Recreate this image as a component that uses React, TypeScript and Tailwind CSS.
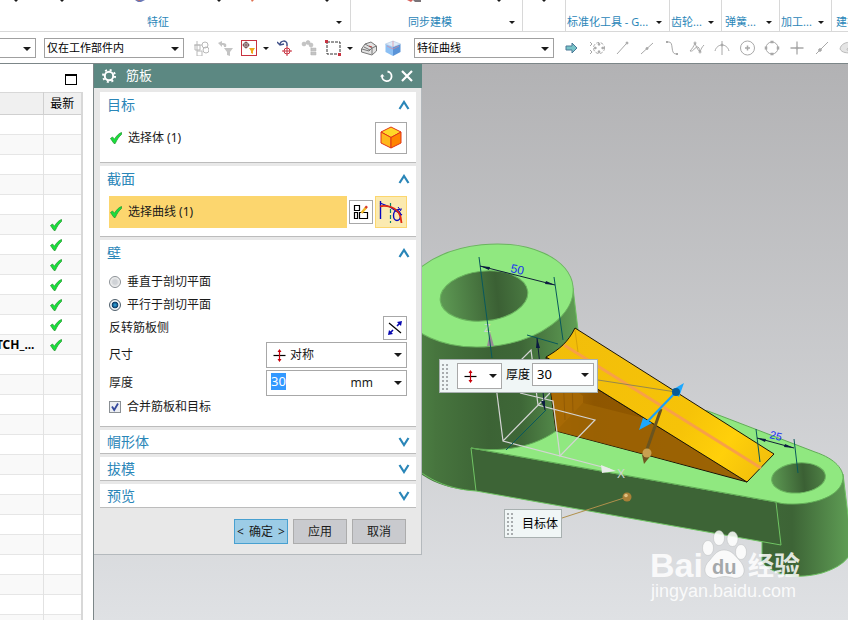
import React, { useState } from 'react';
import { clsx } from 'clsx';

/* ---------- small glyphs ---------- */

const Caret = ({ className = 'w-2 h-1' }: { className?: string }) => (
  <svg viewBox="0 0 8 4" className={clsx('shrink-0 fill-[#1a1a1a]', className)}>
    <path d="M0 0h8L4 4z" />
  </svg>
);

const Tick = () => (
  <svg viewBox="0 0 12 12" className="w-3 h-3 shrink-0">
    <path d="M.5 6.500 2.500 5l2 2.200C6 4.500 8.500 1.500 11.500.5v2C9 4.500 7 7.500 5.200 11.500H4z" fill="#18e03c" stroke="#2a9a35" strokeWidth=".8" />
  </svg>
);

const Chevron = ({ open }: { open: boolean }) => (
  <svg viewBox="0 0 12 10" className="w-3 h-[10px]" fill="none" stroke="#2a86b8" strokeWidth="2.200">
    <path d={open ? 'M1.500 9 6 2l4.500 7' : 'M1.500 1 6 8l4.500-7'} />
  </svg>
);

const SymmetricIcon = () => (
  <svg viewBox="0 0 13 13" className="w-[13px] h-[13px] shrink-0">
    <path d="M.5 6.500h12" stroke="#000" strokeWidth="1.200" />
    <path d="M6.500 1v11" stroke="#c8000a" strokeWidth="1.200" />
    <path d="M6.500 0 8.500 3h-4zM6.500 13l2-3h-4z" fill="#c8000a" />
  </svg>
);

const Grip = ({ rows }: { rows: number }) => (
  <svg width="8" height={rows * 4} viewBox={`0 0 8 ${rows * 4}`} className="shrink-0 fill-[#a8acae]">
    {Array.from({ length: rows }, (_, i) => (
      <React.Fragment key={i}>
        <rect x="0" y={i * 4 + 1} width="2" height="2" />
        <rect x="4" y={i * 4 + 1} width="2" height="2" />
      </React.Fragment>
    ))}
  </svg>
);

/* ---------- ribbon ---------- */

const ribbonGroups = [
  { label: '同步建模', width: 'w-[172px]', align: 'justify-center' },
  { label: '', width: 'w-[43px]', align: 'justify-center' },
  { label: '标准化工具 - G...', width: 'w-[104px]', align: 'pl-px' },
  { label: '齿轮...', width: 'w-[52px]', align: 'pl-px' },
  { label: '弹簧...', width: 'w-[58px]', align: 'pl-[3px]' },
  { label: '加工...', width: 'w-[52px]', align: 'pl-px' },
];

const Ribbon = () => (
  <header className="flex h-8 shrink-0 overflow-hidden border-b border-[#d8d8d8] text-[11px] leading-4 text-[#2a86b8]">
    <div className="flex w-[351px] shrink-0 flex-col border-r border-[#d8d8d8]">
      <div className="flex h-3 items-start pl-[13px]">
        <Caret className="-mt-px h-[3px] w-[6px]" />
        <Caret className="-mt-px ml-10 h-[3px] w-[6px]" />
        <svg viewBox="0 0 12 3" className="ml-[69px] h-[3px] w-3"><path d="M1 0h10L7 2H4z" fill="#6a7ab8" /><path d="M3 0h3v1z" fill="#d86040" /></svg>
        <Caret className="-mt-px ml-[70px] h-[3px] w-[6px]" />
        <svg viewBox="0 0 4 2" className="ml-7 h-[2px] w-1"><path d="M1 0h3L2 2z" fill="#e07050" /></svg>
        <Caret className="-mt-px ml-[70px] h-[3px] w-[6px]" />
      </div>
      <div className="flex items-center pt-[2px] pr-2">
        <span className="flex-1 pr-5 text-center">特征</span>
        <Caret className="h-[3px] w-[6px]" />
      </div>
    </div>
    {ribbonGroups.map((group, i) => (
      <div key={i} className={clsx('flex shrink-0 flex-col border-r border-[#d8d8d8]', group.width)}>
        <div className="flex h-3 items-start">
          {i === 0 && (
            <>
              <svg viewBox="0 0 14 3" className="ml-14 h-[3px] w-[14px]"><path d="M0 0h6L4 2z" fill="#d8605a" /><path d="M6 0h8v2H8z" fill="#7a7478" /></svg>
              <Caret className="-mt-px ml-[75px] h-[3px] w-[6px]" />
            </>
          )}
          {i === 1 && <Caret className="-mt-px ml-[18px] h-[3px] w-[6px]" />}
        </div>
        {group.label && (
          <div className="flex items-center pt-[2px] pr-[7px]">
            <span className={clsx('flex flex-1 whitespace-nowrap', group.align)}>{group.label}</span>
            <Caret className="h-[3px] w-[6px]" />
          </div>
        )}
      </div>
    ))}
    <div className="shrink-0 pt-[14px] pl-1 whitespace-nowrap">建模</div>
  </header>
);

/* ---------- selection toolbar ---------- */

interface ToolbarSelectProps {
  label: string;
  value: string;
  className: string;
}

const ToolbarSelect = ({ label, value, className }: ToolbarSelectProps) => (
  <div className={clsx('relative h-5 shrink-0', className)}>
    <select aria-label={label} className="block h-full w-full appearance-none border border-[#a0a0a0] bg-white pl-[2px] text-[11px] leading-4 text-black">
      <option>{value}</option>
    </select>
    <Caret className="pointer-events-none absolute top-[9px] right-[5px] h-1 w-2" />
  </div>
);

const filterTools = [
  { name: '类型过滤', icon: <g stroke="#b8b8b8" fill="none"><path d="M2 5h5v5H2zM4 1v15h5v-5H4M1 5h8" /><circle cx="12" cy="5" r="3" /><circle cx="13" cy="10" r="3" /></g> },
  { name: '重置过滤器', icon: <g fill="#c4c4c4"><path d="M1 3l4-2v2c4 0 5 1 4 4H7c0-2-1-2-2-2v2z" /><path d="M7 8h9l-3 4v4l-3-1v-3z" /></g> },
  {
    name: '捕捉过滤',
    caret: true,
    icon: <g><rect x=".5" y=".5" width="15" height="15" fill="#fff" stroke="#c83240" /><circle cx="5" cy="5" r="2.500" fill="none" stroke="#70484c" /><path d="M1.500 5h7M5 1.500v7" stroke="#70484c" /><path d="M8 8h6l-2 3v3l-2-1v-2z" fill="#f0a818" /></g>,
  },
  { name: '定向视图', icon: <g fill="none"><path d="M3 5c0-5 7-5 7-1v2M0 2l3 3 4-1" stroke="#405088" strokeWidth="1.500" /><circle cx="10" cy="11" r="3" stroke="#c83240" /><path d="M5 11h10M10 6v10" stroke="#c83240" /></g> },
  { name: '装配约束', icon: <g fill="#c4c4c4" stroke="#b4b4b4" strokeWidth=".5"><circle cx="3" cy="4" r="2" /><circle cx="7" cy="2.500" r="2" /><circle cx="10" cy="5" r="2" /><path d="M10 7v8M10 8h5v3h-5zM10 12h5v3h-5z" /></g> },
  { name: '矩形选择', caret: true, icon: <g><rect x="2" y="2" width="13" height="12" fill="none" stroke="#333" strokeDasharray="3 1" /><path d="M0 0h3v3H0zM13 13h3v3h-3z" fill="#c83240" /></g> },
  { name: '高亮隐藏边', icon: <g stroke="#777"><path d="M.5 9 4 4l6-2 5.500 4v5L11 15 .5 12z" fill="#e2e2e2" /><path d="M4 4l7 4 4.500-2M1 9l7 2 3-3v6M3 7l6 3" fill="none" /><path d="M8 6l3 1" stroke="#b84848" fill="none" /></g> },
  { name: '着色', icon: <g><path d="M.5 4 8 7v9L.5 12z" fill="#8cc0f4" /><path d="M8 7l7.500-3v8L8 16z" fill="#5a94d8" /><path d="M.5 4 8 1l7.500 3L8 7z" fill="#dceaf8" stroke="#9cb8dc" strokeWidth=".5" /><path d="M8 1v6M2 6l6 3 6-3" stroke="#e08898" strokeWidth=".7" fill="none" /></g> },
];

const snapTools = [
  { name: '确定', icon: <path d="M2 6h6V3l5 5-5 5v-3H2z" fill="#78c4c8" stroke="#4a7896" /> },
  { name: '启用捕捉点', icon: <g stroke="#a8a8a8" fill="none"><path d="M1 2l2 2-2 2M1 10l2 2-2 2" /><circle cx="10" cy="8" r="5.500" strokeDasharray="3 1.500" /><path d="M10 3l-1 2h2zM10 13l-1-2h2zM5 8l2-1v2zM15 8l-2-1v2z" fill="#a8a8a8" /></g> },
  { name: '端点', icon: <g stroke="#a8a8a8" fill="#a8a8a8"><path d="M3 14 12 4" /><circle cx="13" cy="3" r="1" /></g> },
  { name: '中点', icon: <g stroke="#a8a8a8" fill="#a8a8a8"><path d="M2 14 14 3" /><circle cx="8" cy="8.500" r="1" /></g> },
  { name: '控制点', icon: <g stroke="#a8a8a8" fill="none"><path d="M2 2h3c5 0 1 12 7 12h2" /><path d="M2 2h2M12 14h2" strokeWidth="2" /></g> },
  { name: '交点', icon: <g stroke="#a8a8a8" fill="none"><path d="M1 11C3 9 5 6 6 3c1 3 2 6 5 9 1-3 2-5 4-7" /><path d="M1 11c4 1 5-5 8-4 2 1 1 4 2 5" /><circle cx="6" cy="3" r="1" /><circle cx="11" cy="12" r="1" /></g> },
  { name: '相交', icon: <g stroke="#a8a8a8" fill="none"><path d="M8 1v14M1 11c2-8 12-8 14 0" /><circle cx="8" cy="5" r="1" fill="#a8a8a8" /></g> },
  { name: '圆心', icon: <g stroke="#a8a8a8" fill="none"><circle cx="8.500" cy="8" r="7" /><path d="M6 8h5M8.500 5.500v5" strokeWidth="1.500" /></g> },
  { name: '象限点', icon: <g stroke="#a8a8a8" fill="none"><circle cx="8" cy="8" r="6" /><path d="M6.500 2h3M6.500 14h3M2 6.500v3M14 6.500v3" strokeWidth="2.500" /></g> },
  { name: '现有点', icon: <g stroke="#a8a8a8"><path d="M1.500 8h13M8 1.500v13" strokeWidth="1.300" /><circle cx="8" cy="8" r="1" fill="#a8a8a8" /></g> },
  { name: '曲线上的点', icon: <g stroke="#a8a8a8"><path d="M2 14 14 2" /><circle cx="6" cy="10" r="1.300" fill="#a8a8a8" /></g> },
  { name: '面上的点', icon: <g><path d="M1 9C2 4 6 2 14 2l6 5-6 6C8 13 3 13 1 9z" fill="#e4e4e4" stroke="#bbb" /><path d="M8 10c0-3 4-4 8-3v5z" fill="#fafafa" stroke="#bbb" /></g> },
];

const ToolGlyph = ({ children }: { children: React.ReactNode }) => (
  <svg viewBox="0 0 16 16" className="h-4 w-4">{children}</svg>
);

const SelectionBar = () => (
  <div className="flex h-8 shrink-0 items-center overflow-hidden border-b border-[#7c8688] pt-px">
    <ToolbarSelect label="类型" value="" className="-ml-1 w-10" />
    <ToolbarSelect label="选择范围" value="仅在工作部件内" className="ml-2 w-[140px]" />
    <div className="ml-[5px] flex shrink-0 items-center">
      {filterTools.map((tool) => (
        <React.Fragment key={tool.name}>
          <button type="button" aria-label={tool.name} className="flex w-6 justify-center">
            <ToolGlyph>{tool.icon}</ToolGlyph>
          </button>
          {tool.caret && (
            <button type="button" aria-label={`${tool.name}选项`} className="flex w-3 pl-[2px]">
              <Caret className="h-[3px] w-[6px]" />
            </button>
          )}
        </React.Fragment>
      ))}
    </div>
    <ToolbarSelect label="曲线规则" value="特征曲线" className="ml-[9px] w-[140px]" />
    <div className="ml-[5px] flex shrink-0 items-center">
      {snapTools.map((tool) => (
        <button key={tool.name} type="button" aria-label={tool.name} className="flex w-[25px] justify-center">
          <ToolGlyph>{tool.icon}</ToolGlyph>
        </button>
      ))}
    </div>
  </div>
);

/* ---------- part navigator ---------- */

const navigatorRows = Array.from({ length: 28 }, (_, i) => ({
  name: i === 11 ? 'TCH_...' : '',
  upToDate: i >= 5 && i <= 11,
}));

const PartNavigator = () => (
  <aside className="w-[94px] shrink-0 overflow-hidden border-r border-[#7c8688] bg-white pr-[10px]">
    <div className="flex h-7 items-end justify-end pr-[6px] pb-[7px]">
      <button type="button" aria-label="最大化" className="h-[11px] w-3 border border-t-2 border-black" />
    </div>
    <table className="w-full table-fixed border-collapse border-t border-r-2 border-[#d8d8d8] text-xs leading-4">
      <thead>
        <tr className="h-[22px] bg-[#f0f0f0]">
          <th className="w-[43px] border-r border-b border-[#d0d0d0]" aria-label="名称" />
          <th className="border-b border-[#d0d0d0] p-0 text-center font-normal">最新</th>
        </tr>
      </thead>
      <tbody>
        {navigatorRows.map((row, i) => (
          <tr key={i} className={clsx('h-5 border-b border-[#e6e6e6]', i % 2 ? 'bg-[#f9f9f9]' : 'bg-white')}>
            <td className="overflow-hidden border-r border-[#e2e2e2] p-0">
              <div className="flex justify-end pr-2 font-bold">{row.name}</div>
            </td>
            <td className="p-0 pl-[6px]">{row.upToDate && <Tick />}</td>
          </tr>
        ))}
      </tbody>
    </table>
  </aside>
);

/* ---------- rib dialog ---------- */

interface SectionProps {
  title: string;
  defaultOpen?: boolean;
  children?: React.ReactNode;
}

const Section = ({ title, defaultOpen = false, children }: SectionProps) => {
  const [open, setOpen] = useState(defaultOpen);
  return (
    <section className="border-b border-[#bcbcbc] bg-white">
      <h2>
        <button
          type="button"
          aria-expanded={open}
          onClick={() => setOpen(!open)}
          className={clsx('flex w-full items-center justify-between pr-[6px] pl-[7px] text-sm text-[#2a86b8]', open ? 'h-[26px]' : 'h-[23px]')}
        >
          {title}
          <Chevron open={open} />
        </button>
      </h2>
      {open && children && <div className="px-[9px] pt-1 pb-2">{children}</div>}
    </section>
  );
};

const RibDialog = () => {
  const [plane, setPlane] = useState('parallel');
  const [merge, setMerge] = useState(true);
  const [thickness, setThickness] = useState('30');

  const radioClass =
    'h-3 w-3 appearance-none rounded-full border border-[#8a8f94] bg-[radial-gradient(circle,#cfd2d6_30%,#f4f4f4_70%)] checked:border-[#50606c] checked:bg-[radial-gradient(circle,#2a9ad0_8%,#0c3a66_42%,#eef2f4_52%)]';

  return (
    <form
      onSubmit={(e) => e.preventDefault()}
      className="relative w-[328px] border-r border-b border-[#b4b9bd] bg-[#e8e8e8] text-xs text-[#1a1a1a]"
    >
      <div className="-mr-px flex h-6 items-center bg-[#5c8882] pr-[9px] pl-2 text-white">
        <svg viewBox="0 0 14 14" className="h-[14px] w-[14px]" fill="none" stroke="#fff">
          <circle cx="7" cy="7" r="4.200" strokeWidth="2" />
          <circle cx="7" cy="7" r="6" strokeWidth="2" strokeDasharray="2 2.710" />
        </svg>
        <h1 className="ml-[10px] flex-1 text-[13px]">筋板</h1>
        <button type="button" aria-label="重置" className="mr-2">
          <svg viewBox="0 0 13 13" className="h-[13px] w-[13px]" fill="none" stroke="#fff" strokeWidth="1.800">
            <path d="M7.500 1.500a4.800 4.800 0 1 1-5.500 4.500" />
            <path d="M0 6.500 2.200 4l2.300 2.500z" fill="#fff" stroke="none" />
          </svg>
        </button>
        <button type="button" aria-label="关闭">
          <svg viewBox="0 0 12 12" className="h-3 w-3" stroke="#fff" strokeWidth="2.200"><path d="M1 1l10 10M11 1 1 11" /></svg>
        </button>
      </div>

      <div className="flex flex-col gap-[3px] pt-1 pr-[5px] pl-[6px]">
        <Section title="目标" defaultOpen>
          <div className="flex items-center">
            <div className="flex flex-1 items-center gap-[6px] pl-px"><Tick />选择体 (1)</div>
            <button type="button" aria-label="选择体" className="flex h-8 w-8 items-center justify-center border border-[#a8a8a8]">
              <svg viewBox="0 0 24 24" className="h-6 w-6" stroke="#e03418" strokeWidth="1" strokeLinejoin="round">
                <path d="M12 1 22 6 12 11.500 2 6z" fill="#ffd828" />
                <path d="M2 6l10 5.500V22L2 17z" fill="#ffb81c" />
                <path d="M22 6 12 11.500V22l10-5z" fill="#ff8400" />
              </svg>
            </button>
          </div>
        </Section>

        <Section title="截面" defaultOpen>
          <div className="flex items-center gap-[2px]">
            <div className="flex h-8 flex-1 items-center gap-[6px] bg-[#fcd66e] pl-px"><Tick />选择曲线 (1)</div>
            <button type="button" aria-label="绘制截面" className="flex h-6 w-6 items-center justify-center border border-[#a8a8a8]">
              <svg viewBox="0 0 16 16" className="h-4 w-4" fill="none" stroke="#000" strokeWidth="1.200">
                <path d="M1.500 1.500h5v5h-5zM1.500 8.500h3v6h-3zM6.500 8.500h8v6h-8z" />
                <path d="M8.500 9l4.500-5.500" stroke="#f0b828" strokeWidth="2.500" />
                <path d="M12.500 4l1.500-1.800" stroke="#d83828" strokeWidth="2.500" />
              </svg>
            </button>
            <button type="button" aria-label="曲线" className="flex h-8 w-8 items-center justify-center border border-[#fcd66e] bg-[#fbeab0]">
              <svg viewBox="0 0 24 24" className="h-6 w-6" fill="none">
                <path d="M1.500 1v18" stroke="#0808c0" strokeWidth="1.400" />
                <path d="M1 3l10 4 12 8" stroke="#0808c0" strokeWidth="1.200" />
                <path d="M11.500 3v20" stroke="#088068" strokeWidth="1.200" strokeDasharray="4 2" />
                <ellipse cx="18" cy="15.500" rx="3.500" ry="5" stroke="#0808c0" strokeWidth="1.400" />
                <path d="M16 10l7-1M19 7l3 4" stroke="#0808c0" />
                <path d="M1 6.500c3-1 7-.5 11 .5C19 9 22 14 22.500 23" stroke="#e02810" strokeWidth="1.800" />
              </svg>
            </button>
          </div>
        </Section>

        <Section title="壁" defaultOpen>
          <label className="flex h-[23px] items-center gap-[6px]">
            <input type="radio" name="plane" className={radioClass} checked={plane === 'normal'} onChange={() => setPlane('normal')} />
            垂直于剖切平面
          </label>
          <label className="flex h-[23px] items-center gap-[6px]">
            <input type="radio" name="plane" className={radioClass} checked={plane === 'parallel'} onChange={() => setPlane('parallel')} />
            平行于剖切平面
          </label>
          <div className="flex h-6 items-center justify-between">
            反转筋板侧
            <button type="button" aria-label="反转筋板侧" className="flex h-6 w-6 items-center justify-center border border-[#a8a8a8]">
              <svg viewBox="0 0 16 16" className="h-4 w-4">
                <path d="M2 3l12 10" stroke="#000" strokeWidth="1.200" />
                <path d="M3 13l3-3M10 6l3-3" stroke="#0808b0" strokeWidth="1.600" />
                <path d="M15 1l-1 5-4-4zM1 15l1-5 4 4z" fill="#0808b0" />
              </svg>
            </button>
          </div>
          <div className="mt-[2px] flex h-[26px] items-center justify-between">
            <label htmlFor="dimension">尺寸</label>
            <div className="relative h-full w-[141px]">
              <span className="pointer-events-none absolute top-[7px] left-[7px]"><SymmetricIcon /></span>
              <select id="dimension" className="block h-full w-full appearance-none border border-[#a8a8a8] pl-[23px]">
                <option>对称</option>
                <option>非对称</option>
              </select>
              <Caret className="pointer-events-none absolute top-[11px] right-[5px] h-1 w-2" />
            </div>
          </div>
          <div className="mt-[2px] flex h-[26px] items-center justify-between">
            <label htmlFor="thickness">厚度</label>
            <div className="flex h-full w-[141px] items-center border border-[#a8a8a8] pr-1 pl-1">
              <input
                id="thickness"
                value={thickness}
                onChange={(e) => setThickness(e.target.value)}
                className="mb-[3px] h-[17px] w-[15px] bg-[#3399ff] text-[13px] text-white outline-none"
              />
              <span className="flex-1 pr-[21px] text-right">mm</span>
              <button type="button" aria-label="厚度选项"><Caret className="h-1 w-2" /></button>
            </div>
          </div>
          <label className="flex h-[22px] items-center gap-[6px]">
            <span className="relative h-3 w-3">
              <input
                type="checkbox"
                checked={merge}
                onChange={(e) => setMerge(e.target.checked)}
                className="block h-3 w-3 appearance-none border border-[#8a8f94] bg-[#eceef2]"
              />
              {merge && (
                <svg viewBox="0 0 12 12" className="pointer-events-none absolute inset-0" fill="none" stroke="#34489c" strokeWidth="1.800">
                  <path d="M3 5.500 5.200 9 9 2.500" />
                </svg>
              )}
            </span>
            合并筋板和目标
          </label>
        </Section>

        <Section title="帽形体" />
        <Section title="拔模" />
        <Section title="预览" />
      </div>

      <div className="flex justify-end gap-[5px] pt-[11px] pr-[15px] pb-[10px]">
        <button type="submit" className="flex h-[25px] w-[54px] items-center justify-center gap-[5px] border border-[#48a0d0] bg-[#9ccce6]">
          <span>&lt;</span>确定<span>&gt;</span>
        </button>
        <button type="button" className="h-[25px] w-[54px] border border-[#acacac] bg-[#c9cace]">应用</button>
        <button type="button" className="h-[25px] w-[54px] border border-[#acacac] bg-[#c9cace]">取消</button>
      </div>
    </form>
  );
};

/* ---------- 3D model ---------- */

const ModelView = () => (
  <svg viewBox="94 64 754 556" width="754" height="556" className="absolute top-0 left-0" aria-label="模型视图">
    <defs>
      <linearGradient id="boss" x1="400" x2="578" y1="0" y2="0" gradientUnits="userSpaceOnUse">
        <stop offset="0" stopColor="#548c4a" />
        <stop offset=".2" stopColor="#47753e" />
        <stop offset=".5" stopColor="#3c6335" />
        <stop offset=".68" stopColor="#3e6737" />
        <stop offset="1" stopColor="#609e55" />
      </linearGradient>
      <linearGradient id="bore" x1="440" x2="528" y1="0" y2="0" gradientUnits="userSpaceOnUse">
        <stop offset="0" stopColor="#5e9a54" />
        <stop offset=".65" stopColor="#3b6034" />
        <stop offset="1" stopColor="#4a7a42" />
      </linearGradient>
      <linearGradient id="endBoss" x1="762" x2="848" y1="0" y2="0" gradientUnits="userSpaceOnUse">
        <stop offset="0" stopColor="#3f6838" />
        <stop offset=".35" stopColor="#3d6436" />
        <stop offset="1" stopColor="#5e9c54" />
      </linearGradient>
      <linearGradient id="endBore" x1="772" x2="825" y1="0" y2="0" gradientUnits="userSpaceOnUse">
        <stop offset="0" stopColor="#5c9852" />
        <stop offset=".6" stopColor="#3b6034" />
        <stop offset="1" stopColor="#4e8045" />
      </linearGradient>
      <linearGradient id="ribTop" x1="560" x2="770" y1="340" y2="470" gradientUnits="userSpaceOnUse">
        <stop offset="0" stopColor="#f2be0a" />
        <stop offset=".6" stopColor="#f6c308" />
        <stop offset=".8" stopColor="#ffd00a" />
        <stop offset="1" stopColor="#f0bd0c" />
      </linearGradient>
      <linearGradient id="ribSide" x1="556" x2="747" y1="0" y2="0" gradientUnits="userSpaceOnUse">
        <stop offset="0" stopColor="#a86a04" />
        <stop offset=".2" stopColor="#8e5600" />
        <stop offset=".7" stopColor="#935a00" />
        <stop offset="1" stopColor="#8a6818" />
      </linearGradient>
    </defs>

    {/* small boss */}
    <path d="M762 500V562C775 577 800 579 822 573C838 568 850 560 852 548L843 474z" fill="url(#endBoss)" stroke="#6cc060" strokeWidth="1" />

    {/* big boss */}
    <path d="M398 290V445C410 475 440 489 476 491L560 456L582 440L578 330L573 288z" fill="url(#boss)" />
    <path d="M400 448C415 476 445 489 476 491M573 288L578 330" fill="none" stroke="#6cc060" />
    <ellipse cx="487" cy="295.500" rx="86.500" ry="51" transform="rotate(-6 487 295.500)" fill="#90e880" stroke="#6ab45e" />
    <ellipse cx="484" cy="296" rx="44" ry="25" transform="rotate(-6 484 296)" fill="url(#bore)" stroke="#6ab45e" />

    {/* arm */}
    <path d="M471 448L476 491L781 545L776 502z" fill="#3d6436" stroke="#70c464" />
    <path d="M471 448C505 453 535 446 556 431L600 400L708 411L815 452C836 459 844 470 843 479C841 496 815 505 788 504C783 504 779 503 776 502z" fill="#90e880" stroke="#62ac57" />
    <ellipse cx="798.500" cy="478" rx="27" ry="15" transform="rotate(-5 798 478)" fill="url(#endBore)" stroke="#6ab45e" />

    {/* rib */}
    <path d="M546 357L747 482L643 454L556 431z" fill="url(#ribSide)" stroke="#1a1408" />
    <path d="M556 431L583 403L643 418L747 481z" fill="#9e6404" opacity=".8" />
    <path d="M548 368L583 396V403L556 431z" fill="#a86a06" opacity=".8" />
    <path d="M563 374L565 420M572 381L573 412" stroke="#8a5404" strokeWidth=".7" />
    <path d="M575 328L774 454L747 482L546 357C560 349 568 342 575 328z" fill="url(#ribTop)" stroke="#1a1408" />
    <path d="M564 345L761 468" stroke="#f8a048" strokeWidth="3" />
    <path d="M575 330L578 352" stroke="#d8a408" />

    {/* datum frame */}
    <g fill="none" stroke="#d4d4d4" strokeWidth="1.200">
      <path d="M496 386L503 441L610 469M503 441L550 393M520 393L553 401L560 456L595 420L538 405L531 350L520 361" />
    </g>
    <path d="M601 465L616 471L602 473z" fill="#e8ecea" />
    <path d="M490 332L494 346H487z" fill="#988c94" />
    <g fill="#d0d4d0" fontFamily="Liberation Sans, sans-serif">
      <text x="617" y="478" fontSize="12">X</text>
      <text x="484" y="332" fontSize="11">Z</text>
    </g>

    {/* dimensions */}
    <g fill="none" stroke="#08585c" strokeWidth="1">
      <path d="M479 257L492 358M554 277L563 340M527 335L558 344M546 410L506 450M756 429L760 462M794 439L798 473" />
    </g>
    <g fill="none" stroke="#102038">
      <path d="M480 266L555 285M537 338L545 410M757 438L794 448" />
    </g>
    <path d="M480 266l10 1-1 3zM555 285l-9-4-1 3zM537 338l-1 10h4zM545 410l-4-9h4zM757 438l9 1-1 3zM794 448l-9-4-1 3z" fill="#0c1c40" />
    <g fill="#1830f0" fontFamily="Liberation Sans, sans-serif">
      <text x="510" y="272" fontSize="12" transform="rotate(12 510 272)">50</text>
      <text x="769" y="438" fontSize="11" transform="rotate(14 769 438)">25</text>
    </g>

    {/* drag handles */}
    <path d="M598 380L676 392" stroke="#98884c" />
    <path d="M661 409L646 452" stroke="#6a5420" strokeWidth="3" />
    <path d="M642 455L652 454L644 464z" fill="#6e5620" />
    <circle cx="647" cy="453" r="4.500" fill="#c8a050" />
    <path d="M676 392L645 424" stroke="#18a0f8" strokeWidth="2.200" />
    <path d="M684 383L672 390L679 397zM639 430L643 418L652 423z" fill="#1ca8ff" />
    <circle cx="676" cy="392" r="4" fill="#085c98" />
    <path d="M562 518L627 497" stroke="#b0904c" />
    <circle cx="627" cy="497" r="4.500" fill="#a88038" />
    <circle cx="626" cy="495.500" r="1.800" fill="#e0c080" />

    {/* watermark */}
    <g fill="#fff" fillOpacity=".85" fontFamily="'Liberation Sans', 'Noto Sans CJK SC', sans-serif">
      <text x="650" y="577" fontSize="34" fontWeight="bold">Bai</text>
      <g stroke="#a8acac" strokeOpacity=".5" strokeWidth=".7">
        <ellipse cx="708" cy="548" rx="5.500" ry="7.500" />
        <ellipse cx="719" cy="538" rx="5.500" ry="7.500" />
        <ellipse cx="732.500" cy="539" rx="5.500" ry="7.500" />
        <ellipse cx="741" cy="552" rx="5.500" ry="7.500" />
        <path d="M724 550C716 550 713 557 709 561C702 568 704 579 716 578C722 576 728 576 734 578C745 579 747 569 740 561C735 556 732 550 724 550z" />
      </g>
      <text x="748" y="575" fontSize="26" fontWeight="bold">经验</text>
      <text x="651" y="597" fontSize="18">jingyan.baidu.com</text>
    </g>
    <text x="712" y="574" fontSize="20" fontWeight="bold" fill="#a4a8aa" fontFamily="Liberation Sans, sans-serif">du</text>
  </svg>
);

/* Widgets pinned to points of the model */
const SceneInputs = () => {
  const [value, setValue] = useState('30');
  return (
    <>
      <div className="absolute top-[295px] left-[345px] flex h-[34px] items-start border border-[#a8b0b0] bg-[#f0f6f6] pt-[3px] pr-[3px] pl-[2px] text-xs text-black">
        <span className="mr-[7px]"><Grip rows={7} /></span>
        <div className="relative h-[26px] w-[45px]">
          <span className="pointer-events-none absolute top-[7px] left-[7px]"><SymmetricIcon /></span>
          <select aria-label="尺寸" className="block h-full w-full appearance-none border border-[#a8a8a8] bg-white" />
          <Caret className="pointer-events-none absolute top-[11px] right-[5px] h-1 w-2" />
        </div>
        <label htmlFor="scene-thickness" className="mr-[2px] ml-1 leading-6">厚度</label>
        <div className="flex h-[23px] w-[62px] items-center border border-[#a8a8a8] bg-white pr-1 pl-1">
          <input id="scene-thickness" value={value} onChange={(e) => setValue(e.target.value)} className="w-8 min-w-0 flex-1 text-[13px] outline-none" />
          <button type="button" aria-label="厚度选项"><Caret className="h-1 w-2" /></button>
        </div>
      </div>
      <div className="absolute top-[445px] left-[410px] flex h-[29px] w-[58px] items-center justify-between border border-[#a8b0b0] bg-[#f0f6f6] pr-[3px] pl-[2px] text-xs text-black">
        <Grip rows={6} />
        目标体
      </div>
    </>
  );
};

export default function App() {
  return (
    <div className="flex h-screen flex-col overflow-hidden bg-white font-['Noto_Sans','Noto_Sans_CJK_SC',sans-serif]">
      <Ribbon />
      <SelectionBar />
      <div className="flex min-h-0 flex-1">
        <PartNavigator />
        <main className="relative flex min-w-0 flex-1 items-start overflow-hidden bg-linear-to-b from-[#b2b2b4] to-[#dfe1e4]">
          <ModelView />
          <RibDialog />
          <SceneInputs />
        </main>
      </div>
    </div>
  );
}
